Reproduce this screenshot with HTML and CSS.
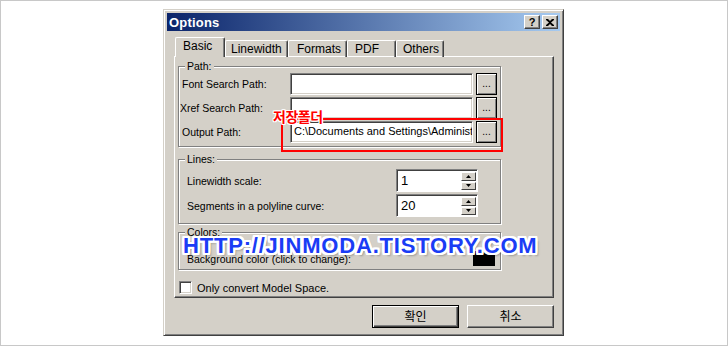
FILE: index.html
```html
<!DOCTYPE html>
<html>
<head>
<meta charset="utf-8">
<link rel="stylesheet" href="styles.css">
</head>
<body>
<div class="frame">
  <div class="dialog">
    <div class="titlebar">
      <span class="title">Options</span>
      <div class="tb-btns">
        <span class="tb-btn help">?</span>
        <span class="tb-btn close"><svg width="8" height="7" viewBox="0 0 8 7"><path d="M0 0h2l2 2 2-2h2v1L5 3.5 8 6v1H6L4 5 2 7H0V6l3-2.5L0 1z" fill="#000"/></svg></span>
      </div>
    </div>

    <div class="tabs">
      <div class="tab active w-basic">Basic</div>
      <div class="tab w-line">Linewidth</div>
      <div class="tab w-formats">Formats</div>
      <div class="tab w-pdf">PDF</div>
      <div class="tab w-others">Others</div>
    </div>

    <div class="panel">
      <div class="group g-path">
        <span class="legend">Path:</span>
        <div class="path-grid">
          <span class="lbl">Font Search Path:</span>
          <div class="field"></div>
          <div class="dots">...</div>
          <span class="lbl lbl-xref">Xref Search Path:</span>
          <div class="field"></div>
          <div class="dots">...</div>
          <span class="lbl">Output Path:</span>
          <div class="field"><span class="val">C:\Documents and Settings\Administrator\My Documents</span></div>
          <div class="dots">...</div>
        </div>
      </div>

      <div class="group g-lines">
        <span class="legend">Lines:</span>
        <div class="lines-grid">
          <span class="lbl">Linewidth scale:</span>
          <div class="spinner">
            <div class="spin-field">1</div>
            <div class="spin-btns">
              <div class="spin-btn"><svg width="5" height="3" viewBox="0 0 5 3"><path d="M2.5 0L5 3H0z" fill="#000"/></svg></div>
              <div class="spin-btn"><svg width="5" height="3" viewBox="0 0 5 3"><path d="M0 0h5L2.5 3z" fill="#000"/></svg></div>
            </div>
          </div>
          <span class="lbl">Segments in a polyline curve:</span>
          <div class="spinner">
            <div class="spin-field">20</div>
            <div class="spin-btns">
              <div class="spin-btn"><svg width="5" height="3" viewBox="0 0 5 3"><path d="M2.5 0L5 3H0z" fill="#000"/></svg></div>
              <div class="spin-btn"><svg width="5" height="3" viewBox="0 0 5 3"><path d="M0 0h5L2.5 3z" fill="#000"/></svg></div>
            </div>
          </div>
        </div>
      </div>

      <div class="group g-colors">
        <span class="legend">Colors:</span>
        <div class="colors-row">
          <span class="lbl">Background color (click to change):</span>
          <div class="swatch"></div>
        </div>
      </div>

      <label class="check-row">
        <span class="checkbox"></span>
        <span class="lbl-check">Only convert Model Space.</span>
      </label>
    </div>

    <div class="buttons">
      <div class="btn default">확인</div>
      <div class="btn">취소</div>
    </div>

    <div class="annot-rect"></div>
    <div class="annot-label">저장폴더</div>
    <div class="watermark">HTTP://JINMODA.TISTORY.COM</div>
  </div>
</div>
</body>
</html>
```

FILE: styles.css
```css
* { box-sizing: border-box; }

body {
  margin: 0;
  background: #fff;
  font-family: "Liberation Sans", Arial, "Noto Sans CJK KR", sans-serif;
  font-size: 11px;
  color: #000;
}

.frame {
  width: 728px;
  height: 346px;
  border: 1px solid #c8c8c8;
  padding: 8px 0 0 162px;
}

.dialog {
  position: relative;
  width: 401px;
  height: 327px;
  background: #d4d0c8;
  border: 1px solid;
  border-color: #d4d0c8 #404040 #404040 #d4d0c8;
  box-shadow: inset 1px 1px #fff, inset -1px -1px #808080;
  padding: 3px;
  display: flex;
  flex-direction: column;
}

/* title bar */
.titlebar {
  height: 18px;
  background: linear-gradient(to right, #0a246a, #a6caf0);
  display: flex;
  align-items: center;
  justify-content: space-between;
  padding: 0 2px 0 2px;
}
.title {
  color: #fff;
  font-weight: bold;
  font-size: 13px;
  letter-spacing: 0.2px;
}
.tb-btns { display: flex; gap: 2px; }
.tb-btn {
  width: 16px;
  height: 14px;
  background: #d4d0c8;
  border: 1px solid;
  border-color: #fff #404040 #404040 #fff;
  box-shadow: inset -1px -1px #808080;
  display: flex;
  align-items: center;
  justify-content: center;
  font-weight: bold;
  font-size: 11px;
  line-height: 1;
}

/* tabs */
.tabs {
  display: flex;
  align-items: flex-end;
  height: 19px;
  margin-top: 7px;
  padding-left: 8px;
  position: relative;
  z-index: 1;
  margin-bottom: -1px;
}
.tab {
  height: 17px;
  font-size: 12px;
  line-height: 16px;
  padding-left: 6px;
  border-top: 1px solid #fff;
  border-left: 1px solid #fff;
  border-right: 1px solid #404040;
  box-shadow: inset -1px 0 #808080;
  border-radius: 2px 2px 0 0;
  white-space: nowrap;
}
.tab.active {
  height: 20px;
  padding-left: 7px;
  line-height: 17px;
  background: #d4d0c8;
}
.w-basic { width: 50px; }
.w-line { width: 63px; padding-left: 5px; }
.w-formats { width: 59px; padding-left: 8px; }
.w-pdf { width: 49px; padding-left: 7px; }
.w-others { width: 48px; padding-left: 6px; }

/* panel */
.panel {
  margin-left: 7px;
  width: 380px;
  height: 242px;
  border: 1px solid;
  border-color: #fff #404040 #404040 #fff;
  box-shadow: inset -1px -1px #808080;
  padding: 9px 0 0 3px;
  display: flex;
  flex-direction: column;
}

.lbl { font-size: 10.5px; }

.group {
  position: relative;
  width: 323px;
  border: 1px solid #808080;
  box-shadow: inset 1px 1px #fff, 1px 1px #fff;
}
.legend {
  position: absolute;
  top: -7px;
  left: 6px;
  padding: 0 2px;
  background: #d4d0c8;
  line-height: 13px;
  font-size: 10.5px;
}

.g-path {
  height: 81px;
  padding: 5px 0 0 3px;
}
.path-grid {
  display: grid;
  grid-template-columns: 105px 183px 21px;
  column-gap: 3px;
  grid-auto-rows: 23px;
  row-gap: 1px;
  align-items: center;
}
.lbl-xref { margin-left: -2px; }
.field {
  height: 22px;
  background: #fff;
  border: 1px solid;
  border-color: #808080 #fff #fff #808080;
  box-shadow: inset 1px 1px #404040, inset -1px -1px #d4d0c8;
  overflow: hidden;
  white-space: nowrap;
  padding: 3px 0 0 3px;
}
.val { font-size: 11px; }
.dots {
  width: 21px;
  height: 22px;
  border: 1px solid #000;
  box-shadow: inset 1px 1px #fff, inset -1px -1px #808080;
  text-align: center;
  line-height: 20px;
  font-size: 10px;
}

.g-lines {
  margin-top: 12px;
  height: 65px;
  padding: 9px 0 0 8px;
}
.lines-grid {
  display: grid;
  grid-template-columns: 209px 82px;
  grid-auto-rows: 23px;
  row-gap: 2px;
  align-items: center;
}
.spinner {
  height: 23px;
  display: flex;
  background: #fff;
  border: 1px solid;
  border-color: #808080 #fff #fff #808080;
  box-shadow: inset 1px 1px #404040;
  padding: 1px;
}
.spin-field {
  flex: 1;
  font-size: 13px;
  line-height: 20px;
  padding-left: 3px;
}
.spin-btns {
  width: 15px;
  display: flex;
  flex-direction: column;
  gap: 1px;
  padding-top: 1px;
}
.spin-btn {
  height: 9px;
  background: #d4d0c8;
  border: 1px solid;
  border-color: #fff #404040 #404040 #fff;
  display: flex;
  align-items: center;
  justify-content: center;
}

.g-colors {
  margin-top: 8px;
  height: 38px;
  padding: 18px 5px 0 8px;
}
.colors-row {
  display: flex;
  justify-content: space-between;
  align-items: center;
  height: 15px;
}
.swatch {
  width: 22px;
  height: 15px;
  background: #000;
}

.check-row {
  margin-top: 11px;
  margin-left: 1px;
  display: flex;
  align-items: center;
  gap: 5px;
}
.lbl-check { font-size: 11px; }
.checkbox {
  width: 13px;
  height: 13px;
  background: #fff;
  border: 1px solid;
  border-color: #808080 #fff #fff #808080;
  box-shadow: inset 1px 1px #404040, inset -1px -1px #d4d0c8;
}

/* buttons */
.buttons {
  display: flex;
  justify-content: flex-end;
  gap: 8px;
  margin-top: 7px;
  padding-right: 6px;
}
.btn {
  width: 87px;
  height: 23px;
  border: 1px solid;
  border-color: #fff #404040 #404040 #fff;
  box-shadow: inset -1px -1px #808080;
  font-family: "Noto Sans CJK KR", sans-serif;
  font-size: 12px;
  line-height: 20px;
  text-align: center;
}
.btn.default {
  border: 1px solid #000;
  box-shadow: inset 1px 1px #fff, inset -1px -1px #404040, inset -2px -2px #808080;
}

/* annotations */
.annot-rect {
  position: absolute;
  left: 117px;
  top: 108px;
  width: 222px;
  height: 34px;
  border: 2px solid #f00;
}
.annot-label {
  position: absolute;
  left: 109px;
  top: 98px;
  font-family: "Noto Sans CJK KR", sans-serif;
  font-weight: bold;
  font-size: 14px;
  line-height: 16px;
  letter-spacing: -0.5px;
  color: #f00;
  text-shadow: 1px 0 #fff, -1px 0 #fff, 0 1px #fff, 0 -1px #fff,
               1px 1px #fff, -1px -1px #fff, 1px -1px #fff, -1px 1px #fff;
}
.watermark {
  position: absolute;
  left: 19px;
  top: 225px;
  font-family: "Liberation Sans", Arial, sans-serif;
  font-weight: bold;
  font-size: 22px;
  line-height: 22px;
  letter-spacing: 0.8px;
  color: #1a3cf5;
  text-shadow: 2px 0 #fff, -2px 0 #fff, 0 2px #fff, 0 -2px #fff,
               2px 2px #fff, -2px -2px #fff, 2px -2px #fff, -2px 2px #fff,
               1px 2px #fff, 2px 1px #fff, -1px 2px #fff, -2px 1px #fff,
               1px -2px #fff, 2px -1px #fff, -1px -2px #fff, -2px -1px #fff,
               3px 3px 2px rgba(0,0,0,0.25);
  white-space: nowrap;
}
```
